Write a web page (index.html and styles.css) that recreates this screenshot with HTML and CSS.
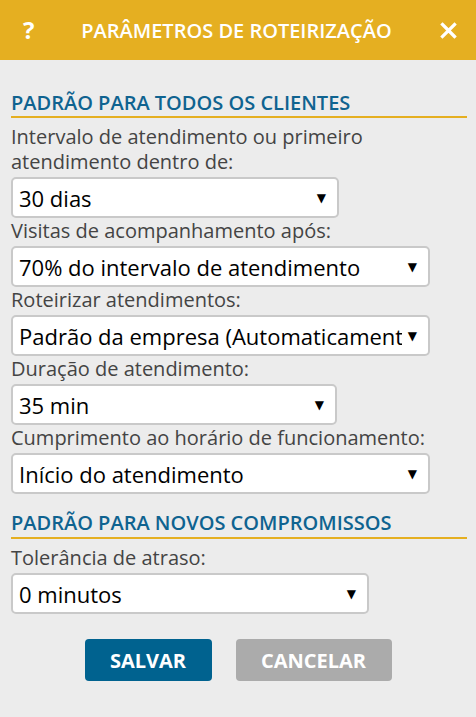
FILE: index.html
```html
<!DOCTYPE html>
<html lang="pt-BR">
<head>
<meta charset="utf-8">
<title>Parâmetros de roteirização</title>
<link rel="stylesheet" href="styles.css">
</head>
<body>
<div class="dialog">
  <header class="dialog-header">
    <span class="help">?</span>
    <h1 class="dialog-title">PARÂMETROS DE ROTEIRIZAÇÃO</h1>
    <span class="close">
      <svg width="17" height="17" viewBox="0 0 17 17"><path d="M2.5 2.5 L14.5 14.5 M14.5 2.5 L2.5 14.5" stroke="#fff" stroke-width="3.2" stroke-linecap="square"/></svg>
    </span>
  </header>
  <main class="content">
    <h2 class="section-title">PADRÃO PARA TODOS OS CLIENTES</h2>
    <div class="field">
      <label class="label">Intervalo de atendimento ou primeiro atendimento dentro de:</label>
      <div class="select w328"><span class="value">30 dias</span><span class="arrow">▼</span></div>
    </div>
    <div class="field">
      <label class="label">Visitas de acompanhamento após:</label>
      <div class="select w419"><span class="value">70% do intervalo de atendimento</span><span class="arrow">▼</span></div>
    </div>
    <div class="field">
      <label class="label">Roteirizar atendimentos:</label>
      <div class="select w419"><span class="value">Padrão da empresa (Automaticamente)</span><span class="arrow">▼</span></div>
    </div>
    <div class="field">
      <label class="label">Duração de atendimento:</label>
      <div class="select w326"><span class="value">35 min</span><span class="arrow">▼</span></div>
    </div>
    <div class="field">
      <label class="label">Cumprimento ao horário de funcionamento:</label>
      <div class="select w419"><span class="value">Início do atendimento</span><span class="arrow">▼</span></div>
    </div>
    <h2 class="section-title second">PADRÃO PARA NOVOS COMPROMISSOS</h2>
    <div class="field">
      <label class="label">Tolerância de atraso:</label>
      <div class="select w358"><span class="value">0 minutos</span><span class="arrow">▼</span></div>
    </div>
    <div class="actions">
      <button class="btn btn-primary">SALVAR</button>
      <button class="btn btn-secondary">CANCELAR</button>
    </div>
  </main>
</div>
</body>
</html>
```
FILE: styles.css
```css
html, body {
  margin: 0;
  padding: 0;
}
body {
  background: #ececec;
  font-family: "Open Sans", "DejaVu Sans", sans-serif;
  width: 476px;
  height: 717px;
  overflow: hidden;
}
.dialog-header {
  height: 60px;
  background: #e5af21;
  display: flex;
  align-items: center;
  color: #fff;
  padding: 0 19px 0 23px;
  box-sizing: border-box;
}
.help {
  font-size: 24px;
  font-weight: 700;
  width: 14px;
  line-height: 1;
}
.dialog-title {
  flex: 1;
  margin: 0;
  text-align: center;
  font-size: 20px;
  font-weight: 600;
  padding-right: 4px;
}
.close {
  display: flex;
  width: 17px;
  height: 17px;
}
.content {
  padding: 31px 9px 0 11px;
}
.section-title {
  margin: 0;
  font-size: 20px;
  line-height: 24px;
  font-weight: 600;
  color: #0f6390;
  border-bottom: 2px solid #e5af21;
  padding-bottom: 1px;
}
.section-title.second {
  margin-top: 17px;
  padding-bottom: 2px;
}
.field {
  display: flex;
  flex-direction: column;
}
.section-title + .field {
  margin-top: 6px;
}
.label {
  font-size: 20px;
  line-height: 25px;
  color: #444;
}
.select {
  margin-top: 3px;
  height: 41px;
  box-sizing: border-box;
  border: 2px solid #c9c9c9;
  border-radius: 5px;
  background: #fff;
  display: flex;
  align-items: center;
  padding: 0 11px 0 6px;
  font-size: 22px;
  color: #000;
  overflow: hidden;
}
.value {
  flex: 1;
  min-width: 0;
  white-space: nowrap;
  overflow: hidden;
  text-overflow: clip;
}
.arrow {
  flex: none;
  font-size: 12px;
  margin-left: 6px;
  font-family: "DejaVu Sans", sans-serif;
}
.w328 { width: 328px; }
.w419 { width: 419px; }
.w326 { width: 326px; }
.w358 { width: 358px; }
.actions {
  display: flex;
  justify-content: center;
  gap: 24px;
  margin-top: 25px;
  padding-right: 2px;
}
.btn {
  height: 42px;
  border: none;
  border-radius: 4px;
  color: #fff;
  font-family: "Open Sans", sans-serif;
  font-weight: 700;
  font-size: 20px;
  padding: 0;
}
.btn-primary {
  width: 127px;
  background: #00628f;
}
.btn-secondary {
  width: 156px;
  background: #ababab;
}
```
